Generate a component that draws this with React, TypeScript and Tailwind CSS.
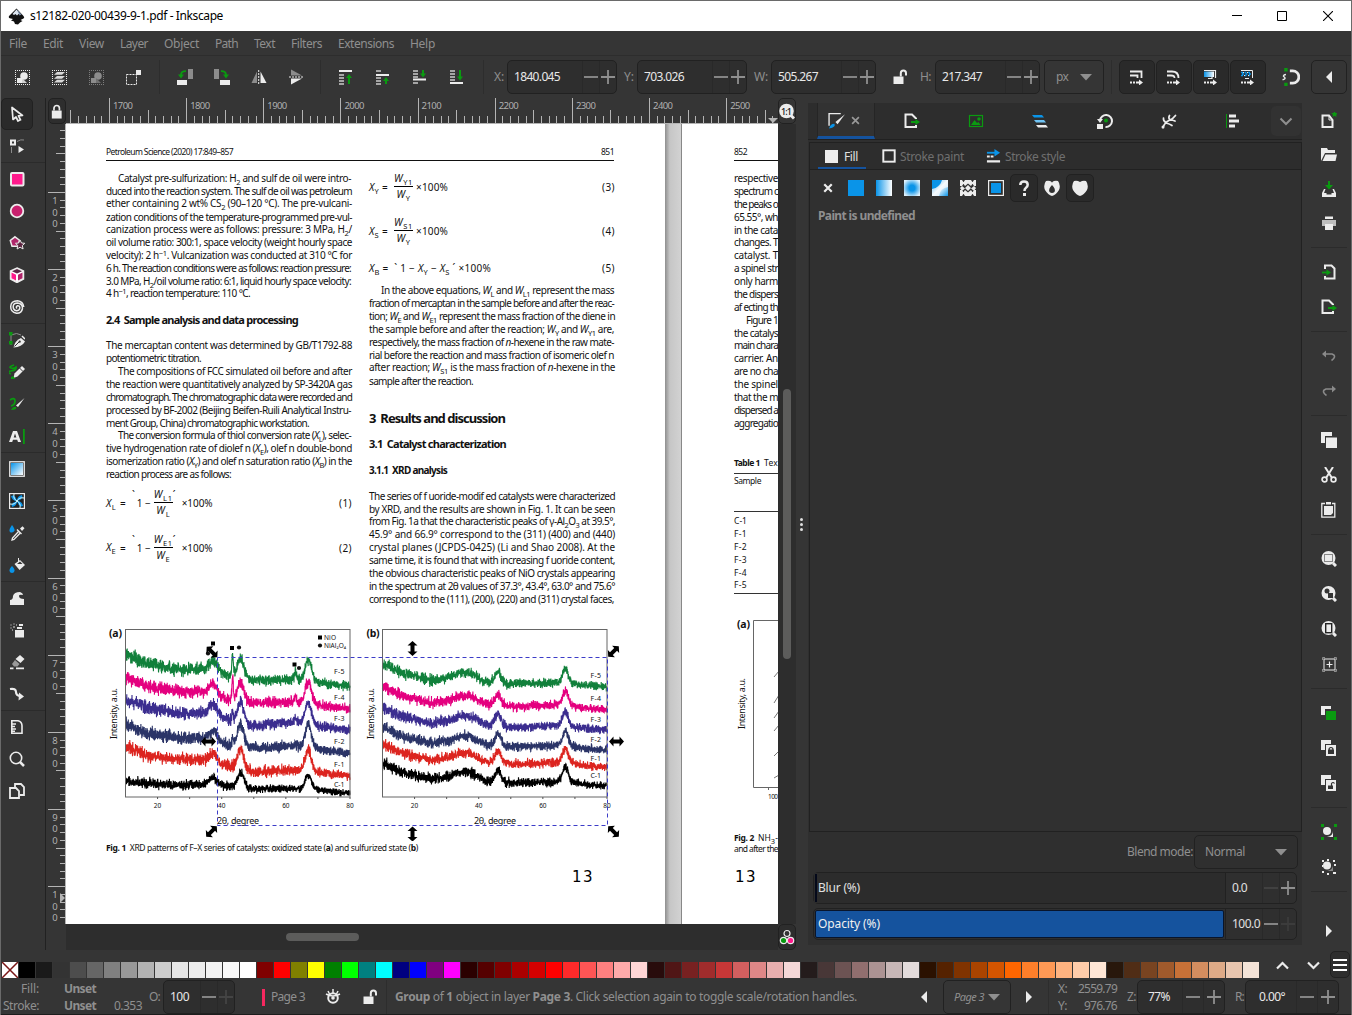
import React, { useLayoutEffect, useRef, useState } from "react";

type Kids = { children?: React.ReactNode };

/* Text whose tracking is adjusted so that it spans exactly `w` pixels. */
function Fit({ w, className = "", children }: Kids & { w: number; className?: string }) {
  const ref = useRef<HTMLSpanElement>(null);
  const [ls, setLs] = useState(0);
  useLayoutEffect(() => {
    const el = ref.current;
    if (!el) return;
    const n = (el.textContent || " ").length;
    setLs((v) => v + (w - el.getBoundingClientRect().width) / n);
  }, [w]);
  return (
    <span ref={ref} className={"inline-block shrink-0 whitespace-pre " + className} style={{ letterSpacing: ls + "px" }}>
      {children}
    </span>
  );
}

function Ic({ children, s = 16, className = "" }: Kids & { s?: number; className?: string }) {
  return (
    <svg width={s} height={s} viewBox="0 0 16 16" className={"shrink-0 " + className} fill="#ececec">
      {children}
    </svg>
  );
}

const G = "#0a9a10";
const B = "#0a94e8";
const P = "#ff1a8c";
const D = "#8c8c8c";

const Dots = ({ c = "#ececec" }) => (
  <path d="M1 1.500h15M1 15.500h15M1.500 3v12M15.500 3v12" fill="none" stroke={c} strokeDasharray="1 1" />
);

/* ---------- command bar icons ---------- */
const selAll = (<Ic><Dots /><path d="M3 9h5v5H3z" /><circle cx="10" cy="7" r="3.800" /><path d="M8 9l5 5H8z" opacity=".85" /></Ic>);
const selLayers = (<Ic><Dots /><path d="M6 3h8l-3 2.800H3zM6 6.900h8l-3 2.800H3zM6 10.800h8l-3 2.800H3z" fill="#d8d8d8" /></Ic>);
const deselect = (<Ic><Dots c="#7c7c7c" /><path d="M3 9h5v5H3z" fill="#8c8c8c" /><circle cx="10" cy="7" r="3.800" fill="#8c8c8c" /><path d="M8 9l5 5H8z" fill="#707070" /></Ic>);
const selTouch = (<Ic><rect x="1.500" y="5.500" width="10" height="10" fill="none" stroke="#ececec" strokeDasharray="2 1" /><path d="M11 1h5v5h-5z" /></Ic>);
const rotL = (<Ic><path d="M0 11h10v5H0z" /><path d="M11 0h5v10h-5z" fill={D} /><path d="M9 2.200Q4 2 4 6" fill="none" stroke={G} strokeWidth="1.800" /><path d="M1 5.500h6L4 9.500z" fill={G} /></Ic>);
const rotR = (<Ic><path d="M6 11h10v5H6z" /><path d="M0 0h5v10H0z" fill={D} /><path d="M7 2.200Q12 2 12 6" fill="none" stroke={G} strokeWidth="1.800" /><path d="M9 5.500h6l-3 4z" fill={G} /></Ic>);
const flipH = (<Ic><path d="M6 2.500V14H.5z" fill={D} /><path d="M9.500 2.500V14h6z" /><path d="M7.700 1v14" stroke="#ececec" strokeDasharray="2 1" /></Ic>);
const flipV = (<Ic><path d="M3 .5v6h11z" fill={D} /><path d="M3 15.500v-6h11z" /><path d="M1 8h14" stroke="#ececec" strokeDasharray="2 1" /></Ic>);
const Bars = ({ ys }: { ys: number[] }) => (<>{ys.map((y) => <path key={y} d={`M1 ${y}h5v2h-5z`} fill="#a5a5a5" />)}</>);
const raiseTop = (<Ic><path d="M1 1h13v2H1z" /><Bars ys={[5, 8, 11, 14]} /><path d="M11 15V8" stroke={G} strokeWidth="2" /><path d="M8 9l3-4 3 4z" fill={G} /></Ic>);
const raise = (<Ic><Bars ys={[1, 8, 11, 14]} /><path d="M1 5h13v2H1z" /><path d="M11 15v-4" stroke={G} strokeWidth="2" /><path d="M8 12l3-4 3 4z" fill={G} /></Ic>);
const lower = (<Ic><Bars ys={[1, 4, 7, 13]} /><path d="M1 9.500h13v2H1z" /><path d="M11 1v4" stroke={G} strokeWidth="2" /><path d="M8 4.500l3 4 3-4z" fill={G} /></Ic>);
const lowerBot = (<Ic><Bars ys={[1, 4, 7, 10]} /><path d="M1 13h13v2H1z" /><path d="M11 1v7" stroke={G} strokeWidth="2" /><path d="M8 7.500l3 4 3-4z" fill={G} /></Ic>);
const lockOpen = (<Ic><path d="M1.500 7.500h10V15h-10z" /><path d="M8.800 7.500V4.200a2.600 2.600 0 015.200 0V6.500" fill="none" stroke="#ececec" strokeWidth="2" /></Ic>);
const DashArrow = () => (<><path d="M1 12.500h2v2H1zM4 12.500h2v2H4zM7 12.500h5v2H7z" /><path d="M10 10.500l4 3-4 3z" /></>);
const scStroke = (<Ic><path d="M1 2.500h11.500V9M1 6.500h7.500V9" fill="none" stroke="#ececec" strokeWidth="1.800" /><DashArrow /></Ic>);
const scCorner = (<Ic><path d="M1 2.500h5q6.500 0 6.500 6.500M1 6.500h4q3.500 0 3.500 2.500" fill="none" stroke="#ececec" strokeWidth="1.800" /><DashArrow /></Ic>);
const scGrad = (<Ic><defs><linearGradient id="lg1"><stop stopColor={B} /><stop offset="1" stopColor="#fff" /></linearGradient></defs><path d="M1 1.500h11.500V9M5 9.500h4V8" fill="none" stroke="#ececec" strokeWidth="1.200" /><path d="M1 2.500h10v5.500H1z" fill="url(#lg1)" /><DashArrow /></Ic>);
const scPat = (<Ic><path d="M1 1.500h11.500V9M5 9.500h4" fill="none" stroke="#ececec" /><path d="M1 3.500h10M2 5h9M1 6.500h10" stroke={B} strokeWidth="1.300" strokeDasharray="2 1.500" /><path d="M3 3.500h8M4 6.500h7" stroke="#ececec" strokeWidth="1" strokeDasharray="1 3" /><DashArrow /></Ic>);
const snap = (<Ic s={18}><path d="M7 2.500h2.500a5.500 5.500 0 010 11H7" fill="none" stroke="#ececec" strokeWidth="2.500" /><path d="M2 0h3v3H2zM2 13h3v3H2z" fill={G} /><path d="M3.500 5.800Q0 6.500 2 8T.5 10.500" fill="none" stroke="#ececec" strokeWidth="1.300" /></Ic>);
const triL = (<Ic><path d="M11 2v12L5 8z" /></Ic>);
const triR = (<Ic><path d="M5 2v12l6-6z" /></Ic>);

/* ---------- toolbox ---------- */
const tools: (React.ReactNode | null)[] = [
  <Ic><path d="M3 1.500l1 12 3-2.500 2 4 2.500-1.200-2-4 4-.3z" fill="none" stroke="#ececec" strokeWidth="1.700" strokeLinejoin="round" /></Ic>,
  <Ic><path d="M2.500 15V9M8 3.500Q12 1 15 2" fill="none" stroke={D} /><path d="M1 1.500h6v6H1zM3 3.500v2h2v-2z" fillRule="evenodd" /><path d="M9.500 8l5.500 3.500-5.500 3.500z" /></Ic>,
  null,
  <Ic><rect x="2" y="2" width="12.500" height="12.500" rx="1" fill={P} stroke="#ececec" strokeWidth="2" /></Ic>,
  <Ic><circle cx="8" cy="8" r="6.300" fill="#c8206e" stroke="#ececec" strokeWidth="1.800" /></Ic>,
  <Ic><path d="M6 1.800l4.500 3.400-1.500 6H3L1.300 5.500z" fill="#b0276b" stroke="#ececec" strokeWidth="1.500" /><path d="M11 5l1.500 3 3.300.3-2.500 2.200.8 3.500-3-1.800-3 1.800.7-3.500L6.500 8.300l3.200-.3z" fill="#5c2440" stroke="#ececec" /></Ic>,
  <Ic><path d="M8 1l6.500 3v8L8 15.500 1.500 12V4z" fill="#fff" stroke="#ececec" strokeWidth="1.500" /><path d="M8 2l5 2.300L8 6.500 3 4.300z" fill="#5b2745" /><path d="M2.500 5.500L7 7.700v5.800l-4.500-2.200z" fill={P} /><path d="M13.500 5.500L9 7.700v5.800l4.500-2.200z" fill="#b0246a" /></Ic>,
  <Ic><path d="M8 9.500q-1.500-1.500.3-2.700Q11 6.500 10.800 9T7.500 11.800Q4 11 4.200 7.500T8.500 4Q13.500 4.500 13.500 9.500M13.500 9.500Q12.500 14.500 7.500 14.300 1.500 13 1.700 7.500T8.500 1.800Q14 2.500 14.800 8" fill="none" stroke="#ececec" strokeWidth="1.500" /></Ic>,
  null,
  <Ic><path d="M2 13V3Q8 0 12 3" fill="none" stroke={D} /><path d="M0 0h3.500v3.500H0zM0 9h3.500v3.500H0z" fill={G} /><path d="M4.500 15.500q1.500-7 7.500-9.500l4 3.500q-3 5.500-11.500 6z" /><path d="M5.500 14.500l5-5" stroke="#353535" /><circle cx="10.700" cy="9.700" r="1.100" fill="#353535" /><path d="M13 4l3 3" stroke="#ececec" strokeWidth="1.500" /></Ic>,
  <Ic><path d="M5 1Q-1 3 2 4T7 3Q8 6 2 7t0 3" fill="none" stroke={G} strokeWidth="1.700" /><path d="M13 2l3 3-7.500 7.500-4 1.500 1-4.500z" /><path d="M10.500 4l3.500 3.500" stroke="#353535" /><path d="M2 13q3-2 4 2H2z" fill={G} /></Ic>,
  <Ic><path d="M1 4q5-3 5 1T2 10" fill="none" stroke={G} strokeWidth="1.800" /><path d="M15.500 2L9 11 7 9.500z" /><path d="M2 14q2-4 5-3 1.500 3-5 3z" fill={G} /></Ic>,
  <Ic><path d="M14 1h1.800v15H14z" fill={G} /><path d="M4 3h4l4 11H9l-.8-2.200H4L3.200 14H0zM6 5.500l-1.300 4h2.700z" /></Ic>,
  null,
  <Ic><defs><linearGradient id="lg2" x2="1" y2="1"><stop stopColor={B} /><stop offset="1" stopColor="#fff" /></linearGradient></defs><rect x=".75" y=".75" width="14.500" height="14.500" fill="#333" stroke="#ececec" strokeWidth="1.300" /><path d="M2 2h12v12H2z" fill="url(#lg2)" /></Ic>,
  <Ic><rect x=".6" y=".6" width="14.800" height="14.800" fill="#222" stroke="#ececec" strokeWidth="1.200" /><path d="M8 8Q3 8 2 3q4-2 6 5zM8 8q5 0 6 5-4 2-6-5zM8 8q0-5 5-6 2 4-5 6zM8 8q0 5-5 6-2-4 5-6z" fill={B} /><path d="M8 8Q4 6 5 1M8 8q4 2 3 7M8 8q2-4 7-3M8 8q-2 4-7 3" stroke="#dff" fill="none" /></Ic>,
  <Ic><path d="M3 0q3 4 2.500 5.500T3 7.500 .5 6 3 0z" fill={B} /><path d="M11 3.500l2.500-2.300 2 2L13 6z M8.500 4l4.500 4.500-1 1L7.500 5z" /><path d="M9.500 6.500l-6 6.500-.5 2 2-.5 6-6.300" fill="none" stroke="#ececec" strokeWidth="1.300" /></Ic>,
  <Ic><path d="M3 9q3 3 2.500 5T3 16 .5 14 3 9z" fill={B} /><path d="M5.500 7l5.500-4 5 5-5.500 5z" fill="#ececec" /><path d="M8 7l3-2.500L13.500 7z" fill="#353535" /><path d="M9.500 1v4" stroke="#ececec" /></Ic>,
  null,
  <Ic><path d="M1 15V10q3 0 3-4 1-4 7-4 3 1 3 3-4-1-4 1 0 3 5 3v6z" /></Ic>,
  <Ic><path d="M6 8h9v7.500H6zM8 5h5v2H8zM10 2h4v2h-4z" /><path d="M1.500 3h1M4.500 2h1M1.500 6h1M4 5h2M3 8h1M7 3h1" stroke={D} strokeWidth="2" /></Ic>,
  <Ic><path d="M11 1l4.500 4-4 4-5-4z" /><path d="M6 6l4.500 4-2 2.500H5L3 10z" fill="#9a9a9a" /><path d="M1 13.500h3.500v1.700H1zM7 13.500h8v1.700H7z" /></Ic>,
  <Ic><path d="M1 3q6-1 6 3t5 4" fill="none" stroke="#ececec" strokeWidth="2.200" /><path d="M10 6.500l5 4-5.500 4z" /></Ic>,
  null,
  <Ic><path d="M2 1.800h7q4 1 4 5v7.400H2M2.800 2v12M3 5h4M3 7.500h3M3 10h4M3 12.200h3" fill="none" stroke="#ececec" strokeWidth="1.600" /></Ic>,
  <Ic><circle cx="7" cy="7" r="5.700" fill="none" stroke="#ececec" strokeWidth="1.600" /><path d="M11 11l4 4" stroke="#ececec" strokeWidth="2.500" /></Ic>,
  <Ic><path d="M1 5h6l3 3v7H1zM6 4V1h6l3 3v8h-4" fill="none" stroke="#ececec" strokeWidth="1.800" /></Ic>,
];

/* ---------- commands on the right ---------- */
const Mag = ({ children }: Kids) => (<Ic><circle cx="7.500" cy="7" r="7" /><path d="M12 12l3 3" stroke="#ececec" strokeWidth="3" />{children}</Ic>);
const exportIc = (<Ic><path d="M8 14H1.500V1.500H8l4 4V6M12 12v2H8" fill="none" stroke="#ececec" strokeWidth="2" /><path d="M7 9h5" stroke={G} strokeWidth="2" /><path d="M11.500 6l4.500 3-4.500 3z" fill={G} /></Ic>);
const rightGroups: React.ReactNode[][] = [
  [
    <Ic><path d="M8 3.500H1.500V15h10V8z" fill="none" stroke="#ececec" strokeWidth="2" /><path d="M8 3.500V8h4" fill="none" stroke="#ececec" /><path d="M13.500-1l1 2 2.500.3-1.800 1.500.3 2.200-2-1.200-2 1.200.5-2.200-1.800-1.500 2.300-.3z" fill={G} /></Ic>,
    <Ic><path d="M0 14V1h6l1 2h7v3H4z" /><path d="M4.500 7.500H16L14.500 14H1.500z" /></Ic>,
    <Ic><path d="M7 0h2v4h3L8 8.500 4 4h3z" fill={G} /><path d="M3 8l-2 4v4h14v-4l-2-4h-1.500l1.500 4h-2.500v1.500h-5V12H3l1.500-4z" /></Ic>,
    <Ic><path d="M4 1.500h8V4H4z" /><path d="M1 5h14v6H1z" fill="#bdbdbd" /><path d="M4 9h8v6H4z" /></Ic>,
  ],
  [
    <Ic><path d="M4 5V1.500h6.500l3 3v10H4V12" fill="none" stroke="#ececec" strokeWidth="2" /><path d="M1 8.500h5" stroke={G} strokeWidth="1.800" /><path d="M5.500 5.500L10 8.500l-4.500 3z" fill={G} /></Ic>,
    exportIc,
  ],
  [
    <Ic><path d="M4 6h7q3 1 2.500 3T10.500 12.500" fill="none" stroke="#8a8a8a" strokeWidth="1.500" /><path d="M1 6l4-3.500v7z" fill="#8a8a8a" /></Ic>,
    <Ic><path d="M12 6H5q-3 1-2.500 3T5.500 12.500" fill="none" stroke="#8a8a8a" strokeWidth="1.500" /><path d="M15 6l-4-3.500v7z" fill="#8a8a8a" /></Ic>,
  ],
  [
    <Ic><path d="M0 0h11v4H4v7H0z" /><path d="M5 5.500h11V16H5z" /></Ic>,
    <Ic><path d="M4 0l7 11M12 0L5 11" stroke="#ececec" strokeWidth="2" /><circle cx="3.500" cy="12.500" r="2.400" fill="none" stroke="#ececec" strokeWidth="1.700" /><circle cx="12.500" cy="12.500" r="2.400" fill="none" stroke="#ececec" strokeWidth="1.700" /></Ic>,
    <Ic><path d="M4 1.500H.8v13.700h13V1.500H11" fill="none" stroke="#ececec" strokeWidth="1.300" /><path d="M3 4h9v7l-2 2H3zM5 0h5v2.500H5z" /></Ic>,
  ],
  [
    <Mag><rect x="3.500" y="3.500" width="8" height="7" fill="none" stroke="#222" strokeDasharray="1 1" /></Mag>,
    <Mag><circle cx="6" cy="5" r="2.500" fill="#353535" /><path d="M7 7h5v5H7z" fill="#353535" /></Mag>,
    <Mag><rect x="4.700" y="2.700" width="6" height="9" fill="none" stroke="#222" strokeWidth="1.400" /></Mag>,
    <Ic><rect x="3" y="3" width="11" height="11" fill="none" stroke="#ececec" /><path d="M8.500 5.500v6M5.500 8.500h6" stroke="#ececec" strokeWidth="1.200" /><path d="M1.500 4V1.500H4M13 1.500h2.500V4M1.500 13v2.500H4M13 15.500h2.500V13" fill="none" stroke={D} /></Ic>,
  ],
  [
    <Ic><path d="M0 1h10v3H4v6H0z" /><path d="M5 6h10v9H5z" fill={G} /></Ic>,
    <Ic><path d="M0 0h10v4H4v6H0z" /><path d="M5 5h10v11H5z" /><path d="M7 9.500h6V14H7z" fill="#333" /><path d="M8.200 10V8.500q1.800-2 3.600 0V10" fill="none" stroke="#333" strokeWidth="1.200" /></Ic>,
    <Ic><path d="M0 0h10v4H4v6H0z" /><path d="M5 5h10v11H5z" /><path d="M7 10.500h5V14H7z" fill="#333" /><path d="M10.500 11V8.500q1.500-2 3 0" fill="none" stroke="#333" strokeWidth="1.200" /></Ic>,
  ],
  [
    <Ic><path d="M0 0h3v3H0zM13 0h3v3h-3zM0 13h3v3H0zM13 13h3v3h-3z" fill={G} /><circle cx="6" cy="7" r="4" /><path d="M12 7v6H6q6-1 6-6z" /></Ic>,
    <Ic><path d="M1 1h2v2H1zM6 0h2v2H6zM12 1h2v2h-2zM1 6h1v2H1zM13 5h2v2h-2zM1 12h2v2H1zM6 14h2v2H6zM12 13h3v2h-3z" /><circle cx="6" cy="6.500" r="4" /><path d="M12 6v6H6q6-1 6-6z" fill="#8a8a8a" /></Ic>,
  ],
];

/* ---------- shared widgets ---------- */
function Vsep({ className = "" }) {
  return <div className={"h-[34px] w-px shrink-0 bg-[#2d2d2d] " + className} />;
}

function Spin({ className, value, vw, c1 = "#8f8f8f", c2 = "#8f8f8f", h = "h-[34px]", bw = "w-[17px]" }: { className: string; value: string; vw: number; c1?: string; c2?: string; h?: string; bw?: string }) {
  return (
    <div className={"flex shrink-0 items-center rounded-[5px] border border-[#212121] bg-[#2e2e2e] text-xs text-[#e8e8e8] " + h + " " + className}>
      <Fit w={vw}>{value}</Fit>
      <div className="flex-1" />
      <div className={"flex h-full items-center justify-center border-l border-[#292929] " + bw}>
        <svg width="14" height="14" className="shrink-0"><path d="M0 7h14" stroke={c1} strokeWidth="1.8" /></svg>
      </div>
      <div className={"flex h-full items-center justify-center border-l border-[#292929] " + bw}>
        <svg width="14" height="14" className="shrink-0"><path d="M0 7h14M7 0v14" stroke={c2} strokeWidth="1.8" /></svg>
      </div>
    </div>
  );
}

function Cell({ children, className = "w-[37px]" }: Kids & { className?: string }) {
  return <div className={"flex shrink-0 items-center justify-center " + className}>{children}</div>;
}

/* ---------- window chrome ---------- */
function TitleBar() {
  return (
    <div className="flex h-[31px] shrink-0 items-center border-t border-[#6a6a6a] bg-white text-black">
      <svg width="17" height="17" viewBox="0 0 17 17" className="ml-[7px]">
        <path d="M8.500 0.500L1 8q-1 2 2 2.500l2 .500-2 1.500 3 1 1 2.500 3 .500 2-2 2.500-1.500-2-1 3-1.500q1.500-1 0-2.500z" fill="#111" />
        <path d="M8.500 1.500L4.500 6l1.500 1 1.500-1 1.500 1.500L10.500 6l2 .500z" fill="#dfe8f2" />
        <path d="M9 1.500l4.500 5-2 1z" fill="#7a8ea8" />
      </svg>
      <Fit w={193} className="ml-[5px] text-xs">s12182-020-00439-9-1.pdf - Inkscape</Fit>
      <div className="flex-1" />
      <Cell className="w-[46px] pl-[2px]"><svg width="10" height="10"><path d="M0 4.500h10" stroke="#000" /></svg></Cell>
      <Cell className="w-[46px]"><svg width="10" height="10"><path d="M.5.500h9v9h-9z" fill="none" stroke="#000" /></svg></Cell>
      <Cell className="w-[46px]"><svg width="10" height="10"><path d="M0 0l10 10M10 0L0 10" stroke="#000" strokeWidth="1.100" /></svg></Cell>
    </div>
  );
}

function MenuBar() {
  const items: [string, number, string][] = [
    ["File", 18, "ml-[8px]"], ["Edit", 20, "ml-[16px]"], ["View", 25, "ml-[16px]"], ["Layer", 28, "ml-[16px]"], ["Object", 35, "ml-[16px]"],
    ["Path", 23, "ml-[16px]"], ["Text", 21, "ml-[16px]"], ["Filters", 31, "ml-[16px]"], ["Extensions", 56, "ml-[16px]"], ["Help", 25, "ml-[16px]"],
  ];
  return (
    <div className="flex h-[25px] shrink-0 items-center border-b border-[#2d2d2d] pt-[2px] text-xs text-[#8f8f8f]">
      {items.map(([t, w, m]) => <Fit key={t} w={w} className={m}>{t}</Fit>)}
    </div>
  );
}

function CommandBar() {
  return (
    <div className="flex h-[42px] shrink-0 items-center pl-[2px] text-xs text-[#8f8f8f]">
      <Cell>{selAll}</Cell><Cell>{selLayers}</Cell><Cell>{deselect}</Cell><Cell>{selTouch}</Cell>
      <Vsep className="ml-[8px] mr-[6px]" />
      <Cell>{rotL}</Cell><Cell>{rotR}</Cell><Cell>{flipH}</Cell><Cell>{flipV}</Cell>
      <Vsep className="mx-[6px]" />
      <Cell>{raiseTop}</Cell><Cell>{raise}</Cell><Cell>{lower}</Cell><Cell>{lowerBot}</Cell>
      <Vsep className="ml-[8px] mr-[10px]" />
      <Fit w={10}>X:</Fit><Spin className="ml-[3px] w-[110px] pl-[6px]" value="1840.045" vw={46} />
      <Fit w={10} className="ml-[7px]">Y:</Fit><Spin className="ml-[3px] w-[110px] pl-[6px]" value="703.026" vw={40} />
      <Fit w={14} className="ml-[7px]">W:</Fit><Spin className="ml-[3px] w-[105px] pl-[6px]" value="505.267" vw={40} />
      <Cell className="ml-[3px] w-[41px]">{lockOpen}</Cell>
      <Fit w={11}>H:</Fit><Spin className="ml-[4px] w-[105px] pl-[6px]" value="217.347" vw={40} />
      <div className="ml-[4px] flex h-[34px] w-[60px] shrink-0 items-center rounded-[5px] border border-[#212121] pl-[11px]">
        <Fit w={12}>px</Fit>
        <svg width="12" height="7" className="ml-[12px]"><path d="M0 0h12L6 6.500z" fill="#8f8f8f" /></svg>
      </div>
      <Vsep className="mx-[7px]" />
      <div className="flex gap-px">
        {[scStroke, scCorner, scGrad, scPat].map((ic, i) => (
          <div key={i} className="flex h-[34px] w-[36px] items-center justify-center rounded-[5px] border border-[#212121] bg-[#2a2a2a]">{ic}</div>
        ))}
      </div>
      <Cell className="w-[45px] pl-[4px]">{snap}</Cell>
      <div className="flex h-[34px] w-[36px] shrink-0 items-center justify-center rounded-[5px] border border-[#212121]">{triL}</div>
    </div>
  );
}

function Toolbox() {
  return (
    <div className="flex w-[45px] shrink-0 flex-col border-r border-[#212121]">
      {tools.map((t, i) =>
        t === null ? <div key={i} className="h-px bg-[#2b2b2b]" /> : (
          <div key={i} className={"flex h-[32px] w-[32px] items-center justify-center " + (i === 0 ? "rounded-[5px] border border-[#212121] bg-[#2a2a2a]" : "")}>{t}</div>
        )
      )}
    </div>
  );
}

/* ---------- rulers ---------- */
function HRuler() {
  const ticks = [];
  for (let i = -5; i <= 87; i++) {
    const x = Math.round(44 + i * 7.715) - 0.5;
    if (x < 0 || x > 712) continue;
    const h = i % 10 === 0 ? 25 : i % 5 === 0 ? 13 : 7;
    ticks.push(<path key={i} d={`M${x} ${25 - h}V25`} stroke="#b4b4b4" />);
  }
  return (
    <svg width="712" height="26" className="shrink-0">
      {ticks}
      <path d="M0 25.500h712" stroke="#b4b4b4" />
      {[1700, 1800, 1900, 2000, 2100, 2200, 2300, 2400, 2500].map((n, i) => (
        <text key={n} x={47 + i * 77.15} y="11" fontSize="9.500" fill="#b0b0b0" textLength="20">{n}</text>
      ))}
      <path d="M702 20h10l-5 5z" fill="#b4b4b4" />
    </svg>
  );
}

function VRuler() {
  const ticks = [];
  for (let i = -8; i <= 95; i++) {
    const y = Math.round(69 + i * 7.712) - 0.5;
    if (y < 0 || y > 800) continue;
    const w = i % 10 === 0 ? 17 : i % 5 === 0 ? 9 : 5;
    ticks.push(<path key={i} d={`M${19 - w} ${y}H19`} stroke="#b4b4b4" />);
  }
  return (
    <svg width="20" height="800" className="shrink-0">
      {ticks}
      <path d="M19.500 0v800" stroke="#b4b4b4" />
      {["100", "200", "300", "400", "500", "600", "700", "800", "900", "100"].map((s, i) =>
        [...s].map((d, k) => (
          <text key={i + "-" + k} x="9" y={80 + i * 77.12 + k * 11.5} fontSize="9.500" fill="#b0b0b0" textAnchor="middle">{d}</text>
        ))
      )}
      <path d="M14 769v10l5-5z" fill="#b4b4b4" />
    </svg>
  );
}

/* ---------- document ---------- */
function Ln({ w = 246, children, indent = false, className = "" }: Kids & { w?: number; indent?: boolean; className?: string }) {
  return (
    <div className={"flex h-[12.88px] items-center " + (indent ? "pl-[12px] " : "") + className}>
      <Fit w={w} className="leading-[12.88px]">{children}</Fit>
    </div>
  );
}
const Sb = ({ children }: Kids) => <span className="relative top-[3px] text-[7.5px]">{children}</span>;
const Sp = ({ children }: Kids) => <span className="relative -top-[3px] text-[7.5px]">{children}</span>;
const V = ({ v, s }: { v: string; s: string }) => (<><i>{v}</i><Sb>{s}</Sb></>);

function Frac({ a, b, w, wb }: { a: string; b: string; w: number; wb: number }) {
  return (
    <div className="flex flex-col items-center">
      <div className="border-b border-black leading-[13px]"><Fit w={w}><V v="W" s={a} /></Fit></div>
      <div className="leading-[14px]"><Fit w={wb}><V v="W" s={b} /></Fit></div>
    </div>
  );
}

function EqL({ s, n }: { s: string; n: string }) {
  return (
    <div className="flex h-[32px] items-center">
      <Fit w={10}><V v="X" s={s} /></Fit>
      <Fit w={9} className="ml-[4px]">=</Fit>
      <span className="ml-[3px] mb-[16px]">`</span>
      <Fit w={14} className="ml-[2px]">1 −</Fit>
      <div className="ml-[3px]"><Frac a={s + "1"} b={s} w={19} wb={14} /></div>
      <span className="mb-[16px]">´</span>
      <Fit w={31} className="ml-[6px]">×100%</Fit>
      <div className="flex-1" />
      <Fit w={13}>({n})</Fit>
    </div>
  );
}

function EqR({ s, a, b, n }: { s: string; a: string; b: string; n: string }) {
  return (
    <div className="flex h-[32px] items-center">
      <Fit w={10}><V v="X" s={s} /></Fit>
      <Fit w={9} className="ml-[3px] mr-[3px]">=</Fit>
      <Frac a={a} b={b} w={19} wb={14} />
      <Fit w={32} className="ml-[3px]">×100%</Fit>
      <div className="flex-1" />
      <Fit w={13}>({n})</Fit>
    </div>
  );
}

function LeftColumn() {
  return (
    <div className="flex w-[246px] shrink-0 flex-col">
      <Ln indent w={233}>Catalyst pre-sulfurization: H<Sb>2</Sb> and sulf de oil were intro-</Ln>
      <Ln>duced into the reaction system. The sulf de oil was petroleum</Ln>
      <Ln>ether containing 2 wt% CS<Sb>2</Sb> (90–120 °C). The pre-vulcani-</Ln>
      <Ln>zation conditions of the temperature-programmed pre-vul-</Ln>
      <Ln>canization process were as follows: pressure: 3 MPa, H<Sb>2</Sb>/</Ln>
      <Ln>oil volume ratio: 300:1, space velocity (weight hourly space</Ln>
      <Ln>velocity): 2 h<Sp>−1</Sp>. Vulcanization was conducted at 310 °C for</Ln>
      <Ln w={245}>6 h. The reaction conditions were as follows: reaction pressure:</Ln>
      <Ln w={245}>3.0 MPa, H<Sb>2</Sb>/oil volume ratio: 6:1, liquid hourly space velocity:</Ln>
      <Ln w={144}>4 h<Sp>−1</Sp>, reaction temperature: 110 °C.</Ln>
      <Ln w={192} className="mt-[12.88px] text-[11px] font-bold">2.4  Sample analysis and data processing</Ln>
      <Ln className="mt-[12.88px]">The mercaptan content was determined by GB/T1792-88</Ln>
      <Ln w={95}>potentiometric titration.</Ln>
      <Ln indent w={234}>The compositions of FCC simulated oil before and after</Ln>
      <Ln>the reaction were quantitatively analyzed by SP-3420A gas</Ln>
      <Ln>chromatograph. The chromatographic data were recorded and</Ln>
      <Ln w={245}>processed by BF-2002 (Beijing Beifen-Ruili Analytical Instru-</Ln>
      <Ln w={203}>ment Group, China) chromatographic workstation.</Ln>
      <Ln indent w={233}>The conversion formula of thiol conversion rate (<V v="X" s="L" />), selec-</Ln>
      <Ln>tive hydrogenation rate of diolef n (<V v="X" s="E" />), olef n double-bond</Ln>
      <Ln>isomerization ratio (<V v="X" s="Y" />) and olef n saturation ratio (<V v="X" s="B" />) in the</Ln>
      <Ln w={125}>reaction process are as follows:</Ln>
      <div className="mt-[6px]"><EqL s="L" n="1" /></div>
      <div className="mt-[12.500px]"><EqL s="E" n="2" /></div>
    </div>
  );
}

function RightColumn() {
  return (
    <div className="-mt-px flex w-[246px] shrink-0 flex-col">
      <EqR s="Y" a="Y1" b="Y" n="3" />
      <div className="mt-[12px]"><EqR s="S" a="S1" b="Y" n="4" /></div>
      <div className="mt-[12px] flex h-[18px] items-center">
        <Fit w={122}><V v="X" s="B" /> =  ` 1 − <V v="X" s="Y" /> − <V v="X" s="S" /> ´ ×100%</Fit>
        <div className="flex-1" /><Fit w={13}>(5)</Fit>
      </div>
      <div className="h-[7.500px]" />
      <Ln indent w={233}>In the above equations, <V v="W" s="L" /> and <V v="W" s="L1" /> represent the mass</Ln>
      <Ln w={245}>fraction of mercaptan in the sample before and after the reac-</Ln>
      <Ln>tion; <V v="W" s="E" /> and <V v="W" s="E1" /> represent the mass fraction of the diene in</Ln>
      <Ln w={245}>the sample before and after the reaction; <V v="W" s="Y" /> and <V v="W" s="Y1" /> are,</Ln>
      <Ln w={245}>respectively, the mass fraction of <i>n</i>-hexene in the raw mate-</Ln>
      <Ln w={245}>rial before the reaction and mass fraction of isomeric olef n</Ln>
      <Ln>after reaction; <V v="W" s="S1" /> is the mass fraction of <i>n</i>-hexene in the</Ln>
      <Ln w={104}>sample after the reaction.</Ln>
      <div className="h-[24.500px]" />
      <Ln w={136} className="text-[13px] font-bold">3  Results and discussion</Ln>
      <Ln w={137} className="mt-[13px] text-[11px] font-bold">3.1  Catalyst characterization</Ln>
      <Ln w={78} className="mt-[13px] text-[10px] font-bold">3.1.1  XRD analysis</Ln>
      <div className="h-[13px]" />
      <Ln>The series of f uoride-modif ed catalysts were characterized</Ln>
      <Ln>by XRD, and the results are shown in Fig. 1. It can be seen</Ln>
      <Ln>from Fig. 1a that the characteristic peaks of γ-Al<Sb>2</Sb>O<Sb>3</Sb> at 39.5°,</Ln>
      <Ln>45.9° and 66.9° correspond to the (311) (400) and (440)</Ln>
      <Ln>crystal planes (JCPDS-0425) (Li and Shao 2008). At the</Ln>
      <Ln>same time, it is found that with increasing f uoride content,</Ln>
      <Ln>the obvious characteristic peaks of NiO crystals appearing</Ln>
      <Ln>in the spectrum at 2θ values of 37.3°, 43.4°, 63.0° and 75.6°</Ln>
      <Ln w={245}>correspond to the (111), (200), (220) and (311) crystal faces,</Ln>
    </div>
  );
}

/* ---------- XRD chart ---------- */
type Curve = { c: string; base: number[]; peaks: [number, number, number][]; amp: number };

function curvePath(cv: Curve, x0: number, seed: number) {
  const deg = [10, 16, 25, 34, 42, 50, 62, 80];
  let s = seed;
  const rnd = () => ((s = (s * 1103515245 + 12345) % 2147483648) / 2147483648);
  let d = "";
  for (let i = 0; i <= 1600; i++) {
    const t = 10 + (i / 1600) * 70;
    let k = 0;
    while (k < 6 && t > deg[k + 1]) k++;
    const f = (t - deg[k]) / (deg[k + 1] - deg[k]);
    let y = cv.base[k] + (cv.base[k + 1] - cv.base[k]) * f;
    for (const [p, sg, h] of cv.peaks) y -= h * Math.exp(-((t - p) ** 2) / (2 * sg * sg));
    const fade = 1 - 0.3 * (i / 1600);
    y += (rnd() + rnd() + rnd() - 1.5) * cv.amp * fade;
    d += (i ? "L" : "M") + (x0 + (i / 1600) * 224.5).toFixed(1) + " " + y.toFixed(1);
  }
  return d;
}

const pkA = (a: number, b: number, c: number, d: number, e: number): [number, number, number][] => [[37.3, 1.2, a], [43.4, 0.22, b], [45.9, 1, c], [63, 0.35, d], [67, 1, e]];
const curvesA: Curve[] = [
  { c: "#11803b", base: [654, 663, 669, 669, 675, 680, 680, 686], peaks: pkA(11, 20, 19, 9, 22), amp: 6.5 },
  { c: "#e4007f", base: [677, 685, 691, 692, 700, 703, 702, 709], peaks: pkA(12, 22, 19, 7, 22), amp: 6.5 },
  { c: "#3b2d8f", base: [699, 707, 713, 713, 719, 726, 722, 730], peaks: pkA(12, 9, 20, 3, 22), amp: 6.5 },
  { c: "#2b3467", base: [724, 733, 737, 739, 744, 748, 746, 753], peaks: pkA(11, 4, 21, 1, 23), amp: 6.5 },
  { c: "#dc241f", base: [746, 755, 759, 760, 766, 772, 770, 776], peaks: pkA(9, 0, 20, 0, 22), amp: 6.5 },
  { c: "#000", base: [781, 783, 785, 784, 786, 789, 788, 793], peaks: pkA(7, 0, 15, 0, 14), amp: 5 },
];
const pkB: [number, number, number][] = [[37, 3, 6], [46, 1, 12], [67, 0.8, 13], [67, 2, 3]];
const bB = [664, 673, 680, 677, 683, 684, 683, 687];
const curvesB: Curve[] = [
  { c: "#11803b", base: bB, peaks: pkB, amp: 5.5 },
  { c: "#e4007f", base: bB.map((v) => v + 22.5), peaks: pkB, amp: 5.5 },
  { c: "#3b2d8f", base: bB.map((v) => v + 43), peaks: pkB, amp: 5.5 },
  { c: "#2b3467", base: bB.map((v) => v + 63), peaks: pkB, amp: 5.5 },
  { c: "#dc241f", base: bB.map((v) => v + 80), peaks: pkB, amp: 5.5 },
  { c: "#000", base: bB.map((v) => v + 99), peaks: pkB, amp: 5.5 },
];

function Handle({ x, y, r }: { x: number; y: number; r: number }) {
  return <path transform={`translate(${x} ${y}) rotate(${r})`} d="M-7.500 0l4.500-5v3h6v-3l4.500 5-4.500 5v-3h-6v3z" fill="#000" />;
}

function Plot({ x0, curves, lx, ys, seed }: { x0: number; curves: Curve[]; lx: number; ys: number[]; seed: number }) {
  return (
    <g>
      {curves.map((c, i) => <path key={i} d={curvePath(c, x0, seed + i * 977)} fill="none" stroke={c.c} strokeWidth="1.100" />)}
      <rect x={x0} y="629.5" width="224.500" height="167.500" fill="none" stroke="#666" />
      {["F-5", "F-4", "F-3", "F-2", "F-1", "C-1"].map((t, i) => <text key={t} x={lx - 5} y={ys[i] + 2.500} fontSize="7" textLength="10.500">{t}</text>)}
      {[20, 30, 40, 50, 60, 70, 80].map((d) => <path key={d} d={`M${x0 + ((d - 10) / 70) * 224.5} 797v2`} stroke="#555" />)}
      {[20, 40, 60, 80].map((d) => <text key={d} x={x0 + ((d - 10) / 70) * 224.5} y="808" fontSize="6.500" textAnchor="middle">{d}</text>)}
      <text x={x0 + 91.500} y="823.500" fontSize="9" textLength="42">2θ, degree</text>
      <text transform={`translate(${x0 - 9} 739) rotate(-90)`} fontSize="9" textLength="51">Intensity, a.u.</text>
    </g>
  );
}

function Figure() {
  return (
    <svg width="565" height="217" viewBox="101 624 565 217" className="shrink-0" fill="#111">
      <Plot x0={125.500} curves={curvesA} lx={339} ys={[671, 697.500, 718, 741, 764, 784.500]} seed={7} />
      <Plot x0={382.500} curves={curvesB} lx={595.500} ys={[675, 698, 719, 739, 758.500, 775.500]} seed={4242} />
      <text x="109" y="637" fontSize="10.500" fontWeight="700" textLength="13">(a)</text>
      <text x="366.500" y="637" fontSize="10.500" fontWeight="700" textLength="13">(b)</text>
      <path d="M318 635.500h4v4h-4zM211 641.500h4v4h-4zM230 646h4v4h-4zM292.500 662.500h4v4h-4z" fill="#000" />
      <circle cx="320" cy="645.500" r="2.100" /><circle cx="239" cy="647.500" r="2.100" /><circle cx="299" cy="668" r="2.100" /><circle cx="208" cy="653.500" r="2.100" />
      <text x="324" y="640" fontSize="6.500" textLength="12">NiO</text>
      <text x="324" y="648" fontSize="6.500" textLength="22">NiAl₂O₄</text>
      <rect x="217.500" y="657.500" width="390" height="168" fill="none" stroke="#3c3cc8" strokeDasharray="4 3" />
      <Handle x={212} y={652} r={45} /><Handle x={412.500} y={648.500} r={90} /><Handle x={613.500} y={651.500} r={-45} />
      <Handle x={208.500} y={741.500} r={0} /><Handle x={616.500} y={741.500} r={0} />
      <Handle x={211.500} y={831.500} r={-45} /><Handle x={412.500} y={834} r={90} /><Handle x={613.500} y={831.500} r={45} />
    </svg>
  );
}

function PageOne() {
  return (
    <div className="flex h-full w-[599px] shrink-0 flex-col bg-white pl-[40px] text-[10px] leading-[12px] text-[#111]">
      <div className="mt-[21px] flex h-[14px] w-[508px] justify-between text-[8.500px] leading-[14px]">
        <Fit w={127}>Petroleum Science (2020) 17:849–857</Fit><Fit w={13}>851</Fit>
      </div>
      <div className="mt-px h-px w-[508px] bg-[#111]" />
      <div className="flex h-[464px] gap-[17px]">
        <div className="pt-[11px]"><LeftColumn /></div>
        <div className="pt-[11px]"><RightColumn /></div>
      </div>
      <div className="-ml-[5px] -mt-px h-[217px]"><Figure /></div>
      <div className="flex h-[14px] items-center text-[8.500px]">
        <Fit w={312}><b>Fig. 1</b>  XRD patterns of F–X series of catalysts: oxidized state (<b>a</b>) and sulfurized state (<b>b</b>)</Fit>
      </div>
      <div className="mt-[12px] w-[488px] text-right font-['DejaVu_Sans'] text-[15px] leading-[20px] text-black"><Fit w={22}>13</Fit></div>
    </div>
  );
}

function PageTwo() {
  const lines = ["respective", "spectrum c", "the peaks o", "65.55°, wh", "in the cata", "changes. T", "catalyst. T", "a spinel str", "only harm", "the dispers", "af ecting th", "Figure 1", "the catalys", "main chara", "carrier. An", "are no cha", "the spinel", "that the m", "dispersed a", "aggregatio"];
  return (
    <div className="flex h-full w-[97px] shrink-0 flex-col overflow-hidden border-l border-[#888] bg-white pl-[52px] text-[10px] leading-[12px] text-[#111]">
      <div className="mt-[21px] h-[14px] text-[8.500px] leading-[14px]"><Fit w={13}>852</Fit></div>
      <div className="mt-px h-px shrink-0 bg-[#111]" />
      <div className="mt-[11px] shrink-0">
        {lines.map((l) => <Ln key={l} w={l === "Figure 1" ? 32 : 44} indent={l === "Figure 1"}>{l}</Ln>)}
      </div>
      <div className="mt-[26.500px] h-[14px] shrink-0 whitespace-nowrap text-[8.500px] leading-[14px]"><Fit w={26} className="font-bold">Table 1</Fit><Fit w={14} className="ml-[4px]">Tex</Fit></div>
      <div className="mt-[3px] h-px shrink-0 bg-[#333]" />
      <div className="mt-px h-[12px] shrink-0 text-[8.500px]"><Fit w={27}>Sample</Fit></div>
      <div className="mt-[24px] h-px shrink-0 bg-[#333]" />
      <div className="mt-[3px] shrink-0 text-[8.500px]">
        {["C-1", "F-1", "F-2", "F-3", "F-4", "F-5"].map((l) => <Ln key={l} w={13}>{l}</Ln>)}
      </div>
      <div className="mt-px h-px shrink-0 bg-[#333]" />
      <svg width="45" height="190" viewBox="734 614 45 190" className="mt-[20px] shrink-0" fill="#111">
        <text x="737" y="628" fontSize="10.500" fontWeight="700" textLength="13">(a)</text>
        <path d="M780 620.500h-26.500v167H780M768.500 787v3" fill="none" stroke="#666" />
        <text transform="translate(745 729) rotate(-90)" fontSize="9" textLength="51">Intensity, a.u.</text>
        <text x="768" y="799" fontSize="6.500" textLength="10">100</text>
        <path d="M774 677l5-6M774 703l5-8M774 718l5-7M774 731l5-6M774 756l5-5M774 778l5-3" stroke="#777" />
      </svg>
      <div className="mt-[28.500px] h-[10px] shrink-0 whitespace-nowrap text-[8.500px] leading-[10px]"><Fit w={20} className="font-bold">Fig. 2</Fit><Fit w={20} className="ml-[4px]">NH<Sb>3</Sb>-</Fit></div>
      <div className="h-[12px] shrink-0 text-[8.500px]"><Fit w={44}>and after the</Fit></div>
      <div className="mt-[12px] shrink-0 pl-px font-['DejaVu_Sans'] text-[15px] leading-[20px] text-black"><Fit w={22}>13</Fit></div>
    </div>
  );
}

function Canvas() {
  return (
    <div className="flex w-[762px] shrink-0 flex-col">
      <div className="flex h-[26px] shrink-0">
        <div className="ml-[2px] flex w-[18px] items-center justify-center rounded-[5px] border border-[#212121] bg-[#2e2e2e]">
          <Ic s={15} className="-ml-px"><path d="M3 7h10.500v8.500H3z" /><path d="M5.300 7V4.500a2.900 2.900 0 015.800 0V7" fill="none" stroke="#ececec" strokeWidth="1.800" /></Ic>
        </div>
        <HRuler />
        <div className="flex w-[18px] items-center justify-center rounded-[5px] border border-[#212121]">
          <svg width="16" height="17" viewBox="0 0 16 17" className="shrink-0"><circle cx="7.500" cy="8" r="7.300" fill="#ececec" /><path d="M12 12.500l3 3" stroke="#ececec" strokeWidth="3" /><text x="2" y="11.500" fontSize="9" fontWeight="500" textLength="11" fill="#111">1:1</text></svg>
        </div>
      </div>
      <div className="flex h-[800px] shrink-0">
        <VRuler />
        <div className="flex w-[712px] shrink-0 overflow-hidden bg-[#d0d0d0]">
          <PageOne />
          <div className="w-[16px] shrink-0 bg-linear-to-r from-[#8f8f8f] via-[#c6c6c6] via-30% to-[#d2d2d2]" />
          <PageTwo />
        </div>
        <div className="flex w-[18px] justify-center bg-[#2d2d2d] pt-[265px]">
          <div className="h-[270px] w-[8px] rounded-full bg-[#5c5c5b]" />
        </div>
      </div>
      <div className="flex h-[26px] shrink-0">
        <div className="w-[20px]" />
        <div className="flex w-[712px] items-center bg-[#2d2d2d] pl-[220px]"><div className="h-[8px] w-[73px] rounded-full bg-[#5c5c5b]" /></div>
        <div className="flex w-[18px] items-center justify-center rounded-[5px] border border-[#212121] bg-[#2d2d2d]">
          <svg width="16" height="16" viewBox="0 0 16 16" className="shrink-0" stroke="#ececec" strokeWidth="1.200"><circle cx="8" cy="4.500" r="3" fill="#333" /><circle cx="4.500" cy="11.500" r="3.200" fill={G} /><circle cx="11.500" cy="11.500" r="3.200" fill={P} /></svg>
        </div>
      </div>
    </div>
  );
}

/* ---------- Fill and stroke dock ---------- */
const heart = "M2 1q3-1 6 1 3-2 6-1 3 4 1 9-3 5-7 6-4-1-7-6-2-5 1-9z";

function Dock() {
  const tabs = [
    exportIc,
    <Ic><rect x="1.500" y="2.500" width="13" height="11" fill="none" stroke={G} strokeWidth="1.200" /><path d="M3 12l3.500-5L9 10l1.500-1 2 3z" fill={G} /><circle cx="11" cy="6" r="1.800" fill={G} /></Ic>,
    <Ic><path d="M0 2h10l2 2.500H2z" fill={B} /><path d="M2 7h10l2 2.500H4z" fill="#6fc3f3" /><path d="M4 12h10l2 2.500H6z" /></Ic>,
    <Ic><path d="M3 7.500A6 6 0 118.500 14" fill="none" stroke="#ececec" strokeWidth="2" /><path d="M0 6h6L3 10z" /><circle cx="9" cy="7.500" r="2" fill={G} /><path d="M0 11h6v5H0z" /></Ic>,
    <Ic><path d="M2 14.500Q4 9 8 7.500T14.500 2.500M5 9.500Q2 8 2.500 5M5 10q4 1 6 2.500M9 7Q7 5 8.500 2.500M9 7q3 0 5 1" fill="none" stroke="#ececec" strokeWidth="1.700" strokeLinecap="round" /><circle cx="2" cy="14" r="1.500" /></Ic>,
    <Ic><path d="M1.500 1v14" stroke={G} /><path d="M4 1.500h7v3H4zM4 6.500h10v3H4zM4 11.500h6v3H4z" /></Ic>,
  ];
  const paints = [
    <Ic s={10}><path d="M2 2l12 12M14 2L2 14" stroke="#ececec" strokeWidth="3.500" /></Ic>,
    <Ic><path d="M0 0h16v16H0z" fill={B} /></Ic>,
    <Ic><defs><linearGradient id="lg3"><stop stopColor={B} /><stop offset="1" stopColor="#fff" /></linearGradient></defs><path d="M0 0h16v16H0z" fill="url(#lg3)" /></Ic>,
    <Ic><defs><radialGradient id="rg1" r=".6"><stop stopColor={B} /><stop offset=".3" stopColor={B} /><stop offset="1" stopColor="#dff1fc" /></radialGradient></defs><path d="M0 0h16v16H0z" fill="url(#rg1)" /></Ic>,
    <Ic><defs><linearGradient id="lg4" x2="1" y2="1"><stop stopColor={B} /><stop offset=".35" stopColor={B} /><stop offset=".5" stopColor="#fff" /><stop offset="1" stopColor={B} /></linearGradient></defs><path d="M0 0h16v16H0z" fill="url(#lg4)" /><path d="M16 0v7q-8 1-9 9H0V9q8-1 10-9z" fill="#f4f9fd" opacity=".8" /></Ic>,
    <Ic><path d="M0 0h2l2 3-2 3H0zM5 0h6l2 3-2 3-3-2.500L5 6 3 3zM14 0h2v6h-2l-2-3zM0 8l2-2 3 2.500L2 11zM5 8l3-3 3 3-3 3zM11 8.500L14 6l2 2-2 3zM0 10h2l2 3-2 3H0zM5 10l3 2.500 3-2.500 2 3-2 3H5l-2-3zM14 10h2v6h-2l-2-3z" /></Ic>,
    <Ic><rect x=".6" y=".6" width="14.800" height="14.800" fill="none" stroke="#ececec" strokeWidth="1.200" /><path d="M3 3h10v10H3z" fill={B} /></Ic>,
    <Ic><path d="M4.300 5Q4.300 1.500 8 1.500t3.700 3.200Q11.700 6.500 10 7.700T8.500 11" fill="none" stroke="#ececec" strokeWidth="2.500" /><path d="M7 13h3v3H7z" /></Ic>,
    <Ic><path d={heart} /><path d="M8 5q4 4 2.500 7-2.500 2-5 0Q4 9 8 5zM7 0h2L8 3z" fill="#303030" /></Ic>,
    <Ic><path d={heart} /></Ic>,
  ];
  return (
    <div className="mt-[5px] flex h-[842px] w-[494px] shrink-0 flex-col bg-[#2f2f2f] text-xs text-[#8f8f8f]">
      <div className="flex h-[37px] shrink-0 items-stretch border-b border-[#212121] bg-[#2d2d2d] pl-[9px]">
        <div className="flex w-[58px] shrink-0 items-center justify-center gap-[6px] border-x border-[#252525] border-b-[3px] border-b-[#15539e] bg-[#323232] pr-[4px] pt-[2px]">
          <Ic s={17}><path d="M1 13V1.500h11" fill="none" stroke="#ececec" strokeWidth="1.300" /><path d="M16 2L9 11.500 7 9.500z" /><path d="M1 15.500q1-4.500 5-4.500 2 3-5 4.500z" fill={B} /></Ic>
          <Ic s={9}><path d="M2 2l12 12M14 2L2 14" stroke="#999" strokeWidth="3" /></Ic>
        </div>
        <div className="flex items-center pl-[5px]">{tabs.map((t, i) => <Cell key={i} className="w-[64.200px]">{t}</Cell>)}</div>
        <div className="ml-[6px] mt-[3px] flex h-[30px] w-[30px] shrink-0 items-center justify-center rounded-[5px] bg-[#323232]">
          <svg width="14" height="9"><path d="M1.500 1.500L7 7l5.500-5.500" fill="none" stroke="#8f8f8f" strokeWidth="2" /></svg>
        </div>
      </div>
      <div className="ml-px mt-[2px] flex h-[690px] w-[493px] shrink-0 flex-col border border-[#212121] bg-[#303030]">
        <div className="flex h-[27px] shrink-0 items-center border-b border-[#212121] bg-[#2d2d2d]">
          <div className="ml-[8px] flex h-full w-[48px] items-center border-b-2 border-[#15539e] pl-[7px] pt-[3px] text-[#e0e0e0]">
            <Ic s={13}><path d="M0 0h16v16H0z" /></Ic><Fit w={14} className="ml-[6px]">Fill</Fit>
          </div>
          <Ic s={14} className="ml-[16px]"><rect x="1.500" y="1.500" width="13" height="13" fill="none" stroke="#ececec" strokeWidth="2.200" /></Ic>
          <Fit w={64} className="ml-[4px] pt-px text-[#6f6f6f]">Stroke paint</Fit>
          <Ic s={15} className="ml-[22px]"><path d="M1 4h9" stroke={B} strokeWidth="2" /><path d="M9 0l6 4-6 4z" fill={B} /><path d="M1 7h3v2H1zM5 7h3v2H5zM1 12h14v2.500H1z" /></Ic>
          <Fit w={60} className="ml-[4px] pt-px text-[#6f6f6f]">Stroke style</Fit>
        </div>
        <div className="ml-[4px] mt-[4px] flex h-[28px] shrink-0">
          {paints.map((p, i) => (
            <div key={i} className={"flex w-[28px] items-center justify-center " + (i === 7 || i === 9 ? "rounded-[5px] border border-[#212121] bg-[#2a2a2a]" : "")}>{p}</div>
          ))}
        </div>
        <div className="ml-[8px] mt-[5px] leading-[18px]"><Fit w={97} className="font-bold">Paint is undefined</Fit></div>
      </div>
      <div className="mt-[3px] flex h-[34px] shrink-0 items-center justify-end pr-[4px]">
        <Fit w={66}>Blend mode:</Fit>
        <div className="ml-px flex h-full w-[104px] items-center rounded-[5px] border border-[#212121] pl-[10px]">
          <Fit w={40}>Normal</Fit>
          <svg width="12" height="7" className="ml-[30px]"><path d="M0 0h12L6 6.500z" fill="#8f8f8f" /></svg>
        </div>
      </div>
      <div className="ml-[5px] mt-[3px] flex h-[32px] w-[484px] shrink-0 items-stretch rounded-[5px] border border-[#212121] text-[#e0e0e0]">
        <div className="flex w-[412px] items-center border-r border-[#212121] bg-[#2c2c2c] py-px pl-px"><div className="h-full w-[2px] bg-[#04091a]" /><Fit w={42} className="ml-px">Blur (%)</Fit></div>
        <div className="flex flex-1 items-center pl-[6px]"><Fit w={15}>0.0</Fit></div>
        <div className="flex w-[17px] items-center justify-center border-l border-[#292929]"><svg width="14" height="14"><path d="M0 7h14" stroke="#444" strokeWidth="1.8" /></svg></div>
        <div className="flex w-[17px] items-center justify-center border-l border-[#292929]"><svg width="14" height="14"><path d="M0 7h14M7 0v14" stroke="#8f8f8f" strokeWidth="1.8" /></svg></div>
      </div>
      <div className="ml-[5px] mt-[4px] flex h-[32px] w-[484px] shrink-0 items-stretch rounded-[5px] border border-[#212121] text-[#f0f0f0]">
        <div className="flex w-[412px] items-center border-r border-[#212121] p-px"><div className="flex h-full w-full items-center rounded-[2px] border border-[#08152c] bg-[#15539e] pl-[2px]"><Fit w={62}>Opacity (%)</Fit></div></div>
        <div className="flex flex-1 items-center pl-[6px] text-[#e0e0e0]"><Fit w={28}>100.0</Fit></div>
        <div className="flex w-[17px] items-center justify-center border-l border-[#292929]"><svg width="14" height="14"><path d="M0 7h14" stroke="#8f8f8f" strokeWidth="1.8" /></svg></div>
        <div className="flex w-[17px] items-center justify-center border-l border-[#292929]"><svg width="14" height="14"><path d="M0 7h14M7 0v14" stroke="#3c3c3c" strokeWidth="1.8" /></svg></div>
      </div>
    </div>
  );
}

function RightBar() {
  return (
    <div className="flex flex-1 flex-col items-center pt-[5px] pl-[4px]">
      {rightGroups.map((g, i) => (
        <React.Fragment key={i}>
          {g.map((ic, k) => <div key={k} className={"flex w-[35px] shrink-0 items-center justify-center " + (i === 0 ? "h-[34.400px]" : "h-[35px]")}>{ic}</div>)}
          <div className="my-[6.500px] h-px w-[36px] shrink-0 bg-[#2b2b2b]" />
        </React.Fragment>
      ))}
      <div className="mt-[24px]">{triR}</div>
    </div>
  );
}

/* ---------- bottom bars ---------- */
const swatches = "000000 1a1a1a 333333 4d4d4d 666666 808080 999999 b3b3b3 cccccc e6e6e6 ececec f2f2f2 f9f9f9 ffffff 800000 ff0000 808000 ffff00 008000 00ff00 008080 00ffff 000080 0000ff 800080 ff00ff 2b0000 550000 800000 aa0000 d40000 ff0000 ff2a2a ff5555 ff8080 ffaaaa ffd5d5 280b0b 501616 782121 a02c2c c83737 d35f5f de8787 e9afaf f4d7d7 241c1c 483737 6c5353 916f6f ac9393 c8b7b7 e3dbdb 2b1100 552200 803300 aa4400 d45500 ff6600 ff7f2a ff9955 ffb380 ffccaa ffe6d5 28170b 502d16 784421 a05a2c c87137 d38d5f deaa87 e9c6af f4e3d7".split(" ");

function Palette() {
  return (
    <div className="flex h-[30px] shrink-0 items-end pl-px">
      <div className="mb-[2px] flex gap-px">
        <svg width="16" height="16"><path d="M0 0h16v16H0z" fill="#fff" /><path d="M0 0l16 16M16 0L0 16" stroke="#7a1717" strokeWidth="1.500" /></svg>
        {swatches.map((c, i) => <div key={i} className="h-[16px] w-[16px]" style={{ backgroundColor: "#" + c }} />)}
      </div>
      <Cell className="ml-[8px] h-[29px] w-[31px]"><svg width="13" height="9"><path d="M1 7.500L6.500 2 12 7.500" fill="none" stroke="#ececec" strokeWidth="2.200" /></svg></Cell>
      <Cell className="h-[30px] w-[31px]"><svg width="13" height="9"><path d="M1 1.500L6.500 7 12 1.500" fill="none" stroke="#ececec" strokeWidth="2.200" /></svg></Cell>
      <div className="mb-[2px] ml-px flex h-[27px] w-[20px] items-center justify-center rounded-[5px] border border-[#212121] bg-[#2e2e2e]">
        <svg width="14" height="12" className="shrink-0"><path d="M0 1h14M0 6h14M0 11h14" stroke="#fff" strokeWidth="2" /></svg>
      </div>
    </div>
  );
}

function StatusBar() {
  return (
    <div className="flex h-[34px] shrink-0 items-center text-xs text-[#8f8f8f]">
      <div className="flex w-[38px] flex-col items-end leading-[17px]"><Fit w={18}>Fill:</Fit><Fit w={36}>Stroke:</Fit></div>
      <div className="ml-[25px] flex w-[50px] flex-col font-bold leading-[17px]"><Fit w={32}>Unset</Fit><Fit w={32}>Unset</Fit></div>
      <div className="mt-[17px] leading-[17px]"><Fit w={28}>0.353</Fit></div>
      <Fit w={11} className="ml-[7px]">O:</Fit>
      <Spin className="ml-[3px] w-[72px] pl-[6px]" value="100" vw={19} c2="#444" />
      <div className="ml-[27px] h-[17px] w-[3px] bg-[#f5285f]" />
      <Fit w={34} className="ml-[6px]">Page 3</Fit>
      <Ic className="ml-[20px]"><circle cx="8" cy="9" r="4.800" fill="none" stroke="#ececec" strokeWidth="2" /><circle cx="8" cy="9" r="1.800" /><path d="M1 5Q8 9 15 5M3 2l1.500 3M8 0v4M13 2l-1.500 3" fill="none" stroke="#ececec" strokeWidth="1.500" /></Ic>
      <div className="ml-[21px]">{lockOpen}</div>
      <Vsep className="ml-[8px] mr-[8px]" />
      <Fit w={462}><b>Group</b> of <b>1</b> object in layer <b>Page 3</b>. Click selection again to toggle scale/rotation handles.</Fit>
      <Cell className="ml-[49px] w-[37px]">{triL}</Cell>
      <div className="flex h-[34px] w-[68px] shrink-0 items-center rounded-[5px] border border-[#212121] pl-[10px] text-[11px] italic">
        <Fit w={30}>Page 3</Fit>
        <svg width="12" height="7" className="ml-[4px]"><path d="M0 0h12L6 6.500z" fill="#8f8f8f" /></svg>
      </div>
      <Cell className="w-[37px]">{triR}</Cell>
      <Vsep className="mr-[9px]" />
      <div className="flex w-[10px] flex-col leading-[17px]"><Fit w={9}>X:</Fit><Fit w={9}>Y:</Fit></div>
      <div className="ml-[10px] flex w-[39px] flex-col items-end leading-[17px]"><Fit w={39}>2559.79</Fit><Fit w={33}>976.76</Fit></div>
      <Fit w={9} className="ml-[10px]">Z:</Fit>
      <Spin className="ml-px w-[88px] pl-[10px]" value="77%" vw={22} bw="w-[21px]" />
      <Fit w={9} className="ml-[10px]">R:</Fit>
      <Spin className="ml-px w-[94px] pl-[13px]" value="0.00°" vw={26} bw="w-[21px]" />
    </div>
  );
}

export default function App() {
  return (
    <div className="flex h-[1015px] w-[1352px] flex-col overflow-hidden border-x border-[#6a6a6a] bg-[#353535] font-['Noto_Sans','Open_Sans',sans-serif]">
      <TitleBar />
      <MenuBar />
      <CommandBar />
      <div className="flex h-[852px] shrink-0">
        <Toolbox />
        <div className="flex w-[762px] shrink-0">
          <div className="w-[750px] shrink-0"><Canvas /></div>
          <div className="flex flex-1 flex-col items-center justify-center gap-[2px] pr-px">
            <div className="h-[3px] w-[3px] rounded-full bg-[#e0e0e0]" />
            <div className="h-[3px] w-[3px] rounded-full bg-[#e0e0e0]" />
            <div className="h-[3px] w-[3px] rounded-full bg-[#e0e0e0]" />
          </div>
        </div>
        <Dock />
        <RightBar />
      </div>
      <Palette />
      <StatusBar />
      <div className="h-px shrink-0 bg-[#1d1d1d]" />
    </div>
  );
}
